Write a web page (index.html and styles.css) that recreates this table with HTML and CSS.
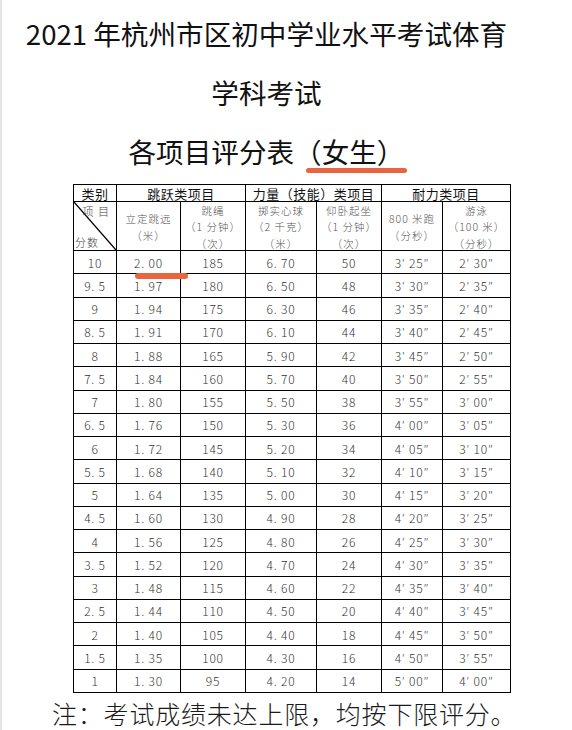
FILE: index.html
```html
<!DOCTYPE html>
<html lang="zh-CN">
<head>
<meta charset="utf-8">
<title>2021年杭州市区初中学业水平考试体育学科考试各项目评分表（女生）</title>
<link rel="stylesheet" href="styles.css">
</head>
<body>
<div class="page">
  <header class="title">
    <div class="line">2021 年杭州市区初中学业水平考试体育</div>
    <div class="line">学科考试</div>
    <div class="line">各项目评分表（女生）</div>
  </header>

  <div class="sheet">
    <div class="cell head">类别</div>
    <div class="cell head span2">跳跃类项目</div>
    <div class="cell head span2">力量（技能）类项目</div>
    <div class="cell head span2">耐力类项目</div>

    <div class="cell diag">
      <svg class="diag-line" viewBox="0 0 100 100" preserveAspectRatio="none"><line x1="0" y1="0" x2="100" y2="100" stroke="#000" stroke-width="1.3" vector-effect="non-scaling-stroke"/></svg>
      <span class="diag-top">项 目</span>
      <span class="diag-bottom">分数</span>
    </div>
    <div class="cell sub">立定跳远<br>（米）</div>
    <div class="cell sub">跳绳<br>（1 分钟）<br>（次）</div>
    <div class="cell sub">掷实心球<br>（2 千克）<br>（米）</div>
    <div class="cell sub">仰卧起坐<br>（1 分钟）<br>（次）</div>
    <div class="cell sub">800 米跑<br>（分秒）</div>
    <div class="cell sub">游泳<br>（100 米）<br>（分秒）</div>

    <div class="cell">10</div><div class="cell">2. 00</div><div class="cell">185</div><div class="cell">6. 70</div><div class="cell">50</div><div class="cell">3′ 25″</div><div class="cell">2′ 30″</div>
    <div class="cell">9. 5</div><div class="cell">1. 97</div><div class="cell">180</div><div class="cell">6. 50</div><div class="cell">48</div><div class="cell">3′ 30″</div><div class="cell">2′ 35″</div>
    <div class="cell">9</div><div class="cell">1. 94</div><div class="cell">175</div><div class="cell">6. 30</div><div class="cell">46</div><div class="cell">3′ 35″</div><div class="cell">2′ 40″</div>
    <div class="cell">8. 5</div><div class="cell">1. 91</div><div class="cell">170</div><div class="cell">6. 10</div><div class="cell">44</div><div class="cell">3′ 40″</div><div class="cell">2′ 45″</div>
    <div class="cell">8</div><div class="cell">1. 88</div><div class="cell">165</div><div class="cell">5. 90</div><div class="cell">42</div><div class="cell">3′ 45″</div><div class="cell">2′ 50″</div>
    <div class="cell">7. 5</div><div class="cell">1. 84</div><div class="cell">160</div><div class="cell">5. 70</div><div class="cell">40</div><div class="cell">3′ 50″</div><div class="cell">2′ 55″</div>
    <div class="cell">7</div><div class="cell">1. 80</div><div class="cell">155</div><div class="cell">5. 50</div><div class="cell">38</div><div class="cell">3′ 55″</div><div class="cell">3′ 00″</div>
    <div class="cell">6. 5</div><div class="cell">1. 76</div><div class="cell">150</div><div class="cell">5. 30</div><div class="cell">36</div><div class="cell">4′ 00″</div><div class="cell">3′ 05″</div>
    <div class="cell">6</div><div class="cell">1. 72</div><div class="cell">145</div><div class="cell">5. 20</div><div class="cell">34</div><div class="cell">4′ 05″</div><div class="cell">3′ 10″</div>
    <div class="cell">5. 5</div><div class="cell">1. 68</div><div class="cell">140</div><div class="cell">5. 10</div><div class="cell">32</div><div class="cell">4′ 10″</div><div class="cell">3′ 15″</div>
    <div class="cell">5</div><div class="cell">1. 64</div><div class="cell">135</div><div class="cell">5. 00</div><div class="cell">30</div><div class="cell">4′ 15″</div><div class="cell">3′ 20″</div>
    <div class="cell">4. 5</div><div class="cell">1. 60</div><div class="cell">130</div><div class="cell">4. 90</div><div class="cell">28</div><div class="cell">4′ 20″</div><div class="cell">3′ 25″</div>
    <div class="cell">4</div><div class="cell">1. 56</div><div class="cell">125</div><div class="cell">4. 80</div><div class="cell">26</div><div class="cell">4′ 25″</div><div class="cell">3′ 30″</div>
    <div class="cell">3. 5</div><div class="cell">1. 52</div><div class="cell">120</div><div class="cell">4. 70</div><div class="cell">24</div><div class="cell">4′ 30″</div><div class="cell">3′ 35″</div>
    <div class="cell">3</div><div class="cell">1. 48</div><div class="cell">115</div><div class="cell">4. 60</div><div class="cell">22</div><div class="cell">4′ 35″</div><div class="cell">3′ 40″</div>
    <div class="cell">2. 5</div><div class="cell">1. 44</div><div class="cell">110</div><div class="cell">4. 50</div><div class="cell">20</div><div class="cell">4′ 40″</div><div class="cell">3′ 45″</div>
    <div class="cell">2</div><div class="cell">1. 40</div><div class="cell">105</div><div class="cell">4. 40</div><div class="cell">18</div><div class="cell">4′ 45″</div><div class="cell">3′ 50″</div>
    <div class="cell">1. 5</div><div class="cell">1. 35</div><div class="cell">100</div><div class="cell">4. 30</div><div class="cell">16</div><div class="cell">4′ 50″</div><div class="cell">3′ 55″</div>
    <div class="cell">1</div><div class="cell">1. 30</div><div class="cell">95</div><div class="cell">4. 20</div><div class="cell">14</div><div class="cell">5′ 00″</div><div class="cell">4′ 00″</div>
  </div>

  <p class="note">注：考试成绩未达上限，均按下限评分。</p>

  <span class="marker marker-title"></span>
  <span class="marker marker-cell"></span>
</div>
</body>
</html>
```

FILE: styles.css
```css
html, body {
  margin: 0;
  padding: 0;
  background: #ffffff;
}

.page {
  position: relative;
  width: 572px;
  height: 730px;
  overflow: hidden;
  background: #ffffff;
  box-shadow: inset 2px 0 0 #e4e4e4;
  font-family: "Noto Sans CJK SC", "Noto Sans", sans-serif;
  color: #111111;
}

/* ---------- title ---------- */
.title {
  box-sizing: border-box;
  height: 184px;
  padding-top: 4px;
  width: 533px;
  text-align: center;
}

.title .line {
  font-size: 27.6px;
  line-height: 59px;
  font-weight: 400;
  color: #111111;
  white-space: nowrap;
}

/* ---------- score sheet ---------- */
.sheet {
  display: grid;
  grid-template-columns: 43px 64px 65px 71px 65px 61px 68px;
  grid-template-rows: 17px 49px repeat(19, 23.26px);
  margin-left: 73px;
  width: max-content;
  border-left: 1px solid #000000;
  border-top: 1px solid #000000;
}

.cell {
  box-sizing: border-box;
  border-right: 1px solid #000000;
  border-bottom: 1px solid #000000;
  display: flex;
  align-items: center;
  justify-content: center;
  text-align: center;
  font-size: 12px;
  font-weight: 300;
  letter-spacing: 0.8px;
  color: #333333;
  white-space: nowrap;
}

.span2 {
  grid-column: span 2;
}

.head {
  font-size: 13px;
  font-weight: 400;
  letter-spacing: 0.5px;
  color: #111111;
  line-height: 1;
}

.sub {
  font-size: 10.5px;
  line-height: 16.5px;
  letter-spacing: 1px;
  color: #555555;
  padding-top: 3px;
}

.diag {
  position: relative;
  font-size: 11px;
  color: #444444;
}

.diag-line {
  position: absolute;
  left: 0;
  top: 0;
  width: 100%;
  height: 100%;
}

.diag-top {
  position: absolute;
  right: 6px;
  top: 1px;
  letter-spacing: 1px;
}

.diag-bottom {
  position: absolute;
  left: 1px;
  bottom: 0;
  letter-spacing: 1px;
}

/* ---------- note ---------- */
.note {
  margin: 2px 0 0 0;
  padding-left: 52px;
  font-size: 25px;
  line-height: 36px;
  font-weight: 300;
  letter-spacing: 0.8px;
  color: #1a1a1a;
  white-space: nowrap;
}

/* ---------- highlighter marks ---------- */
.marker {
  position: absolute;
  background: #e8653f;
  border-radius: 3px;
}

.marker-title {
  left: 306px;
  top: 168px;
  width: 101px;
  height: 5px;
}

.marker-cell {
  left: 135px;
  top: 273px;
  width: 53px;
  height: 6px;
}
```
